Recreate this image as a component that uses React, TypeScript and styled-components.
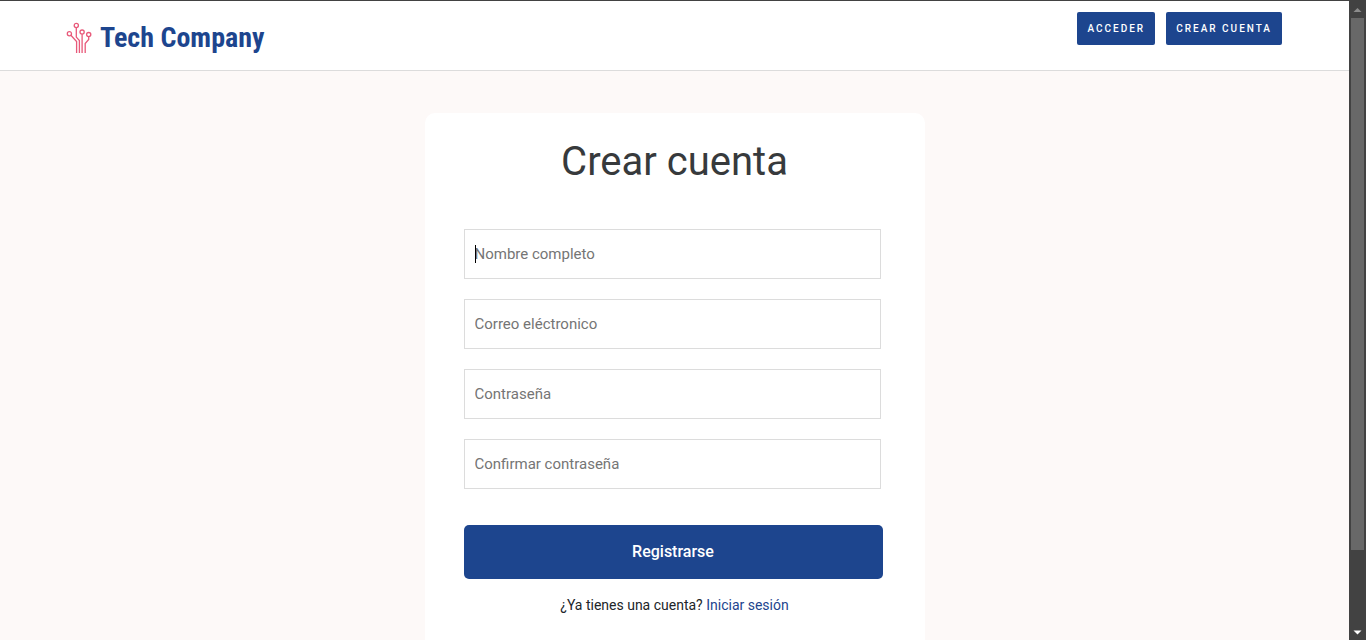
import React from 'react';
import styled, { createGlobalStyle } from 'styled-components';

const blue = '#1d458e';

const GlobalStyle = createGlobalStyle`
  *, *::before, *::after { box-sizing: border-box; }
  body {
    margin: 0;
    background: #fdf9f8;
    color: #212529;
    font-family: Roboto, "Liberation Sans", sans-serif;
    font-size: 14px;
    line-height: 20px;
  }
`;

const Shell = styled.div`
  display: grid;
  grid-template-columns: minmax(0, 1fr) 17px;
  height: 100vh;
  border-top: 1px solid #424242;
`;

const Page = styled.div`
  min-height: 0;
  overflow: hidden;
`;

const Header = styled.header`
  display: flex;
  justify-content: space-between;
  align-items: flex-start;
  padding: 11px 67px 12px 66px;
  background: #fff;
  border-bottom: 1px solid #dcdcdc;
`;

const Brand = styled.a`
  display: flex;
  align-items: center;
  gap: 8px;
  padding-top: 6px;
  color: ${blue};
  font-family: "Roboto Condensed", "Liberation Sans Narrow", "Liberation Sans", sans-serif;
  font-size: 28px;
  font-weight: 700;
  line-height: 40px;
  text-decoration: none;
  white-space: nowrap;
`;

const Nav = styled.nav`
  display: flex;
  gap: 11px;
`;

const NavButton = styled.button`
  padding: 0 10px;
  border: 0;
  border-radius: 2px;
  background: ${blue};
  color: #fff;
  font-family: inherit;
  font-size: 10px;
  font-weight: 500;
  line-height: 33px;
  letter-spacing: 2px;
  text-transform: uppercase;
  white-space: nowrap;
`;

const Main = styled.main`
  padding: 42px 16px;
`;

const Card = styled.section`
  max-width: 500px;
  margin: 0 auto;
  padding: 25px 0 64px;
  border-radius: 10px;
  background: #fff;
`;

const Title = styled.h1`
  margin: 0 0 43px;
  color: #373a3c;
  font-size: 40px;
  font-weight: 400;
  line-height: 48px;
  text-align: center;
`;

const Form = styled.form`
  padding: 0 42px 0 39px;
`;

const Fields = styled.div`
  display: grid;
  gap: 20px;
  margin: 0 2px 36px 0;
`;

const Field = styled.label`
  position: relative;
  display: block;
`;

const Input = styled.input`
  display: block;
  width: 100%;
  height: 50px;
  padding: 0 10px;
  border: 1px solid #dcdcdc;
  border-radius: 0;
  background: #fff;
  font-family: inherit;
  font-size: 15px;
  outline: 0;
  &::placeholder { color: #757575; opacity: 1; }
`;

const Caret = styled.span`
  position: absolute;
  top: 16px;
  left: 11px;
  width: 1px;
  height: 18px;
  background: #000;
`;

const Submit = styled.button`
  display: block;
  width: 100%;
  padding: 0;
  border: 0;
  border-radius: 5px;
  background: ${blue};
  color: #fff;
  font-family: inherit;
  font-size: 16px;
  font-weight: 500;
  line-height: 54px;
`;

const Hint = styled.p`
  margin: 16px 0 0;
  text-align: center;
`;

const Link = styled.a`
  color: ${blue};
  text-decoration: none;
`;

const Scrollbar = styled.div`
  display: grid;
  grid-template-rows: 17px minmax(0, 1fr) 17px;
  padding: 0 2px;
  background: #424242;
`;

const Arrow = styled.svg`
  display: block;
  width: 13px;
  height: 17px;
`;

const Thumb = styled.div`
  height: 88%;
  background: #686868;
`;

const fields = [
  { name: 'nombre', label: 'Nombre completo', type: 'text' },
  { name: 'correo', label: 'Correo eléctronico', type: 'email' },
  { name: 'clave', label: 'Contraseña', type: 'password' },
  { name: 'confirmar', label: 'Confirmar contraseña', type: 'password' },
];

function CircuitLogo() {
  return (
    <svg width="26" height="32" viewBox="0 0 26 32" fill="none" stroke="#e8597a" strokeWidth="1.3" aria-hidden="true">
      <circle cx="10.3" cy="3.5" r="2.1" />
      <circle cx="3.4" cy="11.7" r="2.1" />
      <circle cx="16.1" cy="10.1" r="2.1" />
      <circle cx="22.7" cy="12.6" r="2.1" />
      <path d="M4.9 13.2 10.6 19.5V31M10.3 5.6V15.1L13.4 18.6V31M16.1 12.2V31M22.7 14.7V17.5L19.2 21.5V31" />
    </svg>
  );
}

export default function App() {
  return (
    <>
      <GlobalStyle />
      <Shell>
        <Page>
          <Header>
            <Brand href="#">
              <CircuitLogo />
              Tech Company
            </Brand>
            <Nav>
              <NavButton type="button">Acceder</NavButton>
              <NavButton type="button">Crear cuenta</NavButton>
            </Nav>
          </Header>
          <Main>
            <Card>
              <Title>Crear cuenta</Title>
              <Form>
                <Fields>
                  {fields.map((field, index) => (
                    <Field key={field.name}>
                      <Input name={field.name} type={field.type} placeholder={field.label} aria-label={field.label} />
                      {index === 0 && <Caret />}
                    </Field>
                  ))}
                </Fields>
                <Submit type="submit">Registrarse</Submit>
              </Form>
              <Hint>
                ¿Ya tienes una cuenta? <Link href="#">Iniciar sesión</Link>
              </Hint>
            </Card>
          </Main>
        </Page>
        <Scrollbar aria-hidden="true">
          <Arrow viewBox="0 0 13 17"><path d="M2.5 11 6.5 7l4 4z" fill="#8c8c8c" /></Arrow>
          <Thumb />
          <Arrow viewBox="0 0 13 17"><path d="M2.5 7.5h8l-4 4z" fill="#fff" /></Arrow>
        </Scrollbar>
      </Shell>
    </>
  );
}
